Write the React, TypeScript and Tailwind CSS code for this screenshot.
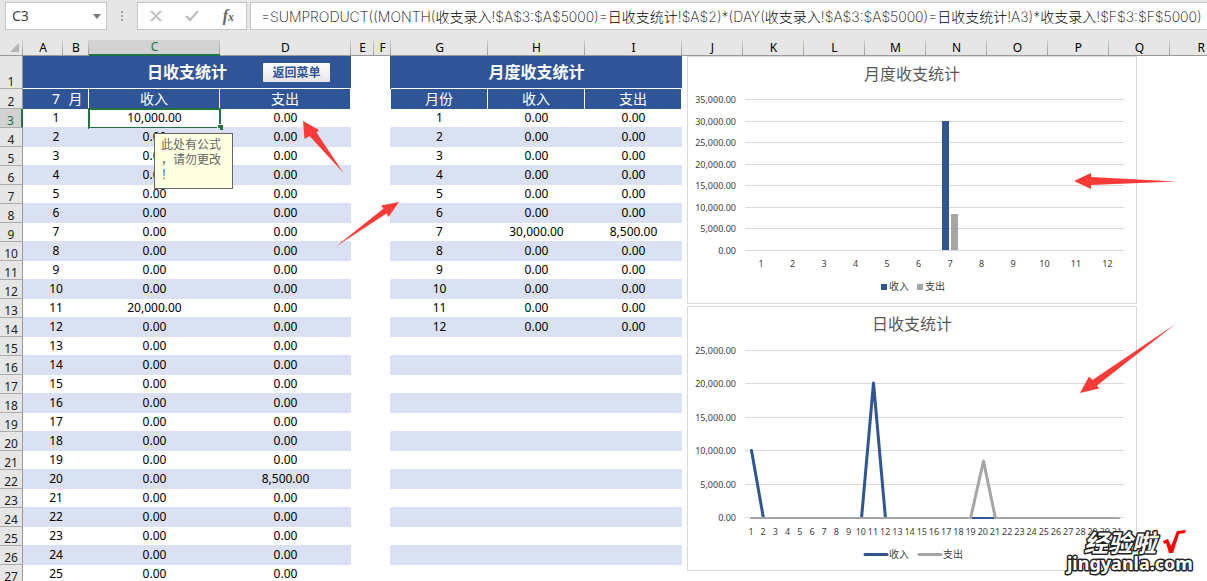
import { Fragment, type ReactNode } from "react";

const FORMULA =
  "=SUMPRODUCT((MONTH(收支录入!$A$3:$A$5000)=日收支统计!$A$2)*(DAY(收支录入!$A$3:$A$5000)=日收支统计!A3)*收支录入!$F$3:$F$5000)";

const columns = [
  { name: "A", width: "w-[40px]" },
  { name: "B", width: "w-[26px]" },
  { name: "C", width: "w-[131px]" },
  { name: "D", width: "w-[131px]" },
  { name: "E", width: "w-[23px]" },
  { name: "F", width: "w-[17px]" },
  { name: "G", width: "w-[97px]" },
  { name: "H", width: "w-[97px]" },
  { name: "I", width: "w-[97px]" },
  { name: "J", width: "w-[61px]" },
  { name: "K", width: "w-[61px]" },
  { name: "L", width: "w-[61px]" },
  { name: "M", width: "w-[61px]" },
  { name: "N", width: "w-[61px]" },
  { name: "O", width: "w-[61px]" },
  { name: "P", width: "w-[61px]" },
  { name: "Q", width: "w-[61px]" },
  { name: "R", width: "" },
];

const days = Array.from({ length: 25 }, (_, i) => i + 1);
const dayIncome: Record<number, string> = { 1: "10,000.00", 11: "20,000.00" };
const dayExpense: Record<number, string> = { 20: "8,500.00" };
const monthIncome: Record<number, string> = { 7: "30,000.00" };
const monthExpense: Record<number, string> = { 7: "8,500.00" };

const blueCell = "h-[20px] border-r border-white bg-[#2f5597] p-0 text-center text-sm font-normal leading-[18px] text-white";
const separator = "bg-[linear-gradient(to_bottom,#d0d0d0,#999999)] bg-[length:1px_100%] bg-right bg-no-repeat";

function headerStyle(name: string) {
  if (name === "C") return `${separator} border-b-2 border-b-[#217346] bg-[#d2d2d2] text-center leading-[14px] text-[#217346]`;
  if (name === "R") return "border-b border-b-[#999999] pr-[2px] text-right leading-[15px]";
  return `${separator} border-b border-b-[#999999] text-center leading-[15px]`;
}

function RowHeader({ row, tall = "h-[19px]" }: { row: number; tall?: string }) {
  const active = row === 3;
  return (
    <th
      scope="row"
      className={`${tall} border-b p-0 text-center align-bottom text-xs font-normal leading-[13px] ${
        active
          ? "border-b-[#ababab] border-r-2 border-r-[#217346] bg-[#d2d2d2] text-[#217346]"
          : "border-b-[#ababab] border-r border-r-[#999999] bg-[#e6e6e6] text-[#222222]"
      }`}
    >
      {row}
    </th>
  );
}

function FormulaBar() {
  return (
    <div className="flex h-10 shrink-0 items-start bg-[#e6e6e6] pl-[5px] pt-[2px]">
      <div className="flex h-7 w-[102px] shrink-0 items-center border border-[#c6c6c6] bg-white">
        <input
          aria-label="名称框"
          defaultValue="C3"
          className="min-w-0 flex-1 bg-transparent pl-[6px] text-sm text-[#444444] outline-none"
        />
        <button type="button" aria-label="展开名称框" className="px-[5px]">
          <svg width="8" height="5" viewBox="0 0 8 5">
            <path d="M0 0H8L4 5Z" fill="#777777" />
          </svg>
        </button>
      </div>
      <svg className="mx-[13px] mt-2 shrink-0" width="4" height="12" viewBox="0 0 4 12" fill="#a6a6a6">
        <path d="M1 1h2v2H1zM1 5h2v2H1zM1 9h2v2H1z" />
      </svg>
      <div className="flex h-7 w-[110px] shrink-0 items-center justify-between border border-[#c6c6c6] bg-white px-3">
        <button type="button" aria-label="取消">
          <svg width="12" height="12" viewBox="0 0 12 12" fill="none" stroke="#c0c0c0" strokeWidth="2">
            <path d="M1 1L11 11M11 1L1 11" />
          </svg>
        </button>
        <button type="button" aria-label="输入">
          <svg width="14" height="12" viewBox="0 0 14 12" fill="none" stroke="#c0c0c0" strokeWidth="2.4">
            <path d="M1 6L5 10L13 1" />
          </svg>
        </button>
        <button
          type="button"
          aria-label="插入函数"
          className="font-['Liberation_Serif','Noto_Sans_CJK_SC',serif] text-base font-bold italic leading-5 text-[#666666]"
        >
          f<span className="text-xs">x</span>
        </button>
      </div>
      <input
        aria-label="编辑栏"
        defaultValue={FORMULA}
        className="ml-[3px] h-7 min-w-0 flex-1 border border-r-0 border-[#c6c6c6] bg-white pl-[10px] font-['Inter','Noto_Sans_CJK_SC',sans-serif] text-sm font-extralight text-black outline-none"
      />
    </div>
  );
}

function ChartFrame({ title, height, children }: { title: string; height: number; children: ReactNode }) {
  return (
    <svg
      role="img"
      aria-label={title}
      width="448"
      height={height}
      viewBox={`0 0 448 ${height}`}
      className="box-content block border border-[#d9d9d9] bg-white"
      fill="#404040"
      fontSize="9"
    >
      <text x="224" y="23" textAnchor="middle" fontSize="16" fill="#595959">
        {title}
      </text>
      {children}
    </svg>
  );
}

function Gridlines({ max, bottom, step }: { max: number; bottom: number; step: number }) {
  const count = max / 5000;
  return (
    <>
      {Array.from({ length: count + 1 }, (_, i) => {
        const y = Math.round(bottom - i * step) + 0.5;
        return (
          <Fragment key={i}>
            <path d={`M57 ${y}H436`} stroke="#d9d9d9" />
            <text x="48" y={y + 3} textAnchor="end">
              {(i * 5000).toLocaleString("en-US", { minimumFractionDigits: 2 })}
            </text>
          </Fragment>
        );
      })}
    </>
  );
}

function MonthChart() {
  return (
    <ChartFrame title="月度收支统计" height={246}>
      <Gridlines max={35000} bottom={193} step={21.57} />
      {Array.from({ length: 12 }, (_, i) => (
        <text key={i} x={73 + i * 31.5} y="210" textAnchor="middle">
          {i + 1}
        </text>
      ))}
      <rect x="254" y="64" width="7" height="129" fill="#2f5597" />
      <rect x="263" y="157" width="7" height="36" fill="#a5a5a5" />
      <rect x="193" y="227" width="6" height="6" fill="#2f5597" />
      <text x="201" y="233" fontSize="10">
        收入
      </text>
      <rect x="229" y="227" width="6" height="6" fill="#a5a5a5" />
      <text x="237" y="233" fontSize="10">
        支出
      </text>
    </ChartFrame>
  );
}

function DayChart() {
  return (
    <ChartFrame title="日收支统计" height={263}>
      <Gridlines max={25000} bottom={210} step={33.5} />
      {Array.from({ length: 31 }, (_, i) => (
        <text key={i} x={63 + i * 12.2} y="228" textAnchor="middle">
          {i + 1}
        </text>
      ))}
      <clipPath id="day-plot">
        <path d="M57 0H436V212H57Z" />
      </clipPath>
      <g fill="none" strokeWidth="3" strokeLinejoin="round" strokeLinecap="round">
        <g clipPath="url(#day-plot)">
          <path d="M63.5 143.5L75.5 211.500H173.5L185.5 76L197.5 211.500H430" stroke="#2f5597" />
          <path d="M63.5 211.500H282.5L295.5 154L307.5 211.500H430" stroke="#a5a5a5" />
          <path d="M284.5 211H306" stroke="#2f5597" strokeWidth="2" strokeLinecap="butt" />
        </g>
        <path d="M177 247.5H199" stroke="#2f5597" />
        <path d="M231 247.5H253" stroke="#a5a5a5" />
      </g>
      <text x="201" y="251" fontSize="10">
        收入
      </text>
      <text x="255" y="251" fontSize="10">
        支出
      </text>
    </ChartFrame>
  );
}

function Selection() {
  return (
    <>
      <span className="pointer-events-none absolute -bottom-[2px] -left-[1px] -right-[1px] -top-[1px] border-2 border-[#217346]" />
      <span className="absolute -bottom-[3px] -right-[3px] h-[6px] w-[6px] border-l border-t border-white bg-[#217346]" />
      <span
        role="tooltip"
        className="absolute left-[65px] top-[24px] z-10 h-[56px] w-[79px] border border-[#666666] bg-[#ffffe1] pl-[6px] pt-[3px] text-left text-xs leading-[15px] text-[#666666]"
      >
        此处有公式
        <br />
        ，请勿更改
        <br />！
      </span>
    </>
  );
}

function Marks() {
  return (
    <svg
      className="pointer-events-none absolute left-0 top-0 z-20"
      width="1207"
      height="541"
      viewBox="0 40 1207 541"
      fill="#fc3a37"
    >
      <path d="M303 121L319 130L316.5 132.5L343.5 173L309.5 136L304.5 139Z" />
      <path d="M399 202L388.5 217L386.5 213.5L336 246.5L383.5 208.5L381 205.5Z" />
      <path d="M1074 181L1091 173V177L1176 181.5L1091 185V189Z" />
      <path d="M1080 393L1089 376.5L1092.5 380L1175.5 324L1097 385.5L1099 388.5Z" />
      <path d="M1163 541L1168 539L1171 546L1177 531L1186 530L1185 533L1179 534L1173 553H1169L1166 543L1164 544Z" fill="#ff0000" />
      <g
        fill="#ffffff"
        stroke="#222222"
        strokeWidth="3"
        strokeLinejoin="round"
        paintOrder="stroke"
        fontWeight="700"
        fontStyle="italic"
      >
        <text x="1084" y="552" fontSize="24">
          经验啦
        </text>
        <text x="1067" y="570" fontSize="18" fontStyle="normal">
          jingyanla.com
        </text>
      </g>
    </svg>
  );
}

export default function App() {
  return (
    <main className="flex h-screen flex-col overflow-hidden bg-white font-['Noto_Sans','Noto_Sans_CJK_SC',sans-serif] text-xs text-black">
      <FormulaBar />
      <div className="relative">
        <table className="w-full table-fixed border-separate border-spacing-0">
          <colgroup>
            <col className="w-[23px]" />
            {columns.map((col) => (
              <col key={col.name} className={col.width} />
            ))}
          </colgroup>
          <thead>
            <tr className="bg-[#e6e6e6]">
              <td className={`h-4 border-b border-b-[#999999] p-0 ${separator}`}>
                <svg className="ml-auto mr-1" width="9" height="9" viewBox="0 0 9 9">
                  <path d="M9 0V9H0Z" fill="#b4b4b4" />
                </svg>
              </td>
              {columns.map((col) => (
                <th key={col.name} scope="col" className={`h-4 p-0 text-xs font-normal ${headerStyle(col.name)}`}>
                  {col.name}
                </th>
              ))}
            </tr>
          </thead>
          <tbody>
            <tr>
              <RowHeader row={1} tall="h-[33px]" />
              <th colSpan={4} className="relative border-b border-white bg-[#2f5597] p-0 text-base font-bold leading-6 text-white">
                日收支统计
                <button
                  type="button"
                  className="absolute right-[21px] top-[7px] h-[19px] w-[67px] rounded-[1px] bg-linear-to-b from-white to-[#e4e4e8] text-xs font-bold leading-[18px] text-[#2f5597]"
                >
                  返回菜单
                </button>
              </th>
              <td className="p-0" />
              <td className="border-r border-[#2f5597] p-0" />
              <th colSpan={3} className="border-b border-white bg-[#2f5597] p-0 text-base font-bold leading-6 text-white">
                月度收支统计
              </th>
              <td colSpan={9} rowSpan={27} className="p-0 pl-[5px] align-top">
                <div className="flex flex-col gap-[2px]">
                  <MonthChart />
                  <DayChart />
                </div>
              </td>
            </tr>
            <tr>
              <RowHeader row={2} tall="h-[20px]" />
              <td className="bg-[#2f5597] p-0 pr-[3px] text-right text-sm leading-[18px] text-white">7</td>
              <td className={blueCell}>月</td>
              <th className={blueCell}>收入</th>
              <th className={blueCell}>支出</th>
              <td className="p-0" />
              <td className="border-r border-white p-0" />
              <th className={blueCell}>月份</th>
              <th className={blueCell}>收入</th>
              <th className={blueCell}>支出</th>
            </tr>
            {days.map((day) => {
              // the band colour also covers the gridline above each shaded row
              const cell = `h-[19px] border-b border-[#dae1f2] p-0 text-center leading-[18px] ${
                day % 2 === 0 ? "bg-[#dae1f2]" : ""
              }`;
              return (
                <tr key={day}>
                  <RowHeader row={day + 2} />
                  <td colSpan={2} className={cell}>
                    {day}
                  </td>
                  <td className={`relative ${cell}`}>
                    {dayIncome[day] ?? "0.00"}
                    {day === 1 && <Selection />}
                  </td>
                  <td className={cell}>{dayExpense[day] ?? "0.00"}</td>
                  <td className="p-0" />
                  <td className={`p-0 ${day % 2 === 0 ? "border-r border-[#dae1f2]" : ""}`} />
                  <td className={cell}>{day <= 12 ? day : ""}</td>
                  <td className={cell}>{day <= 12 ? (monthIncome[day] ?? "0.00") : ""}</td>
                  <td className={cell}>{day <= 12 ? (monthExpense[day] ?? "0.00") : ""}</td>
                </tr>
              );
            })}
          </tbody>
        </table>
        <Marks />
      </div>
    </main>
  );
}
